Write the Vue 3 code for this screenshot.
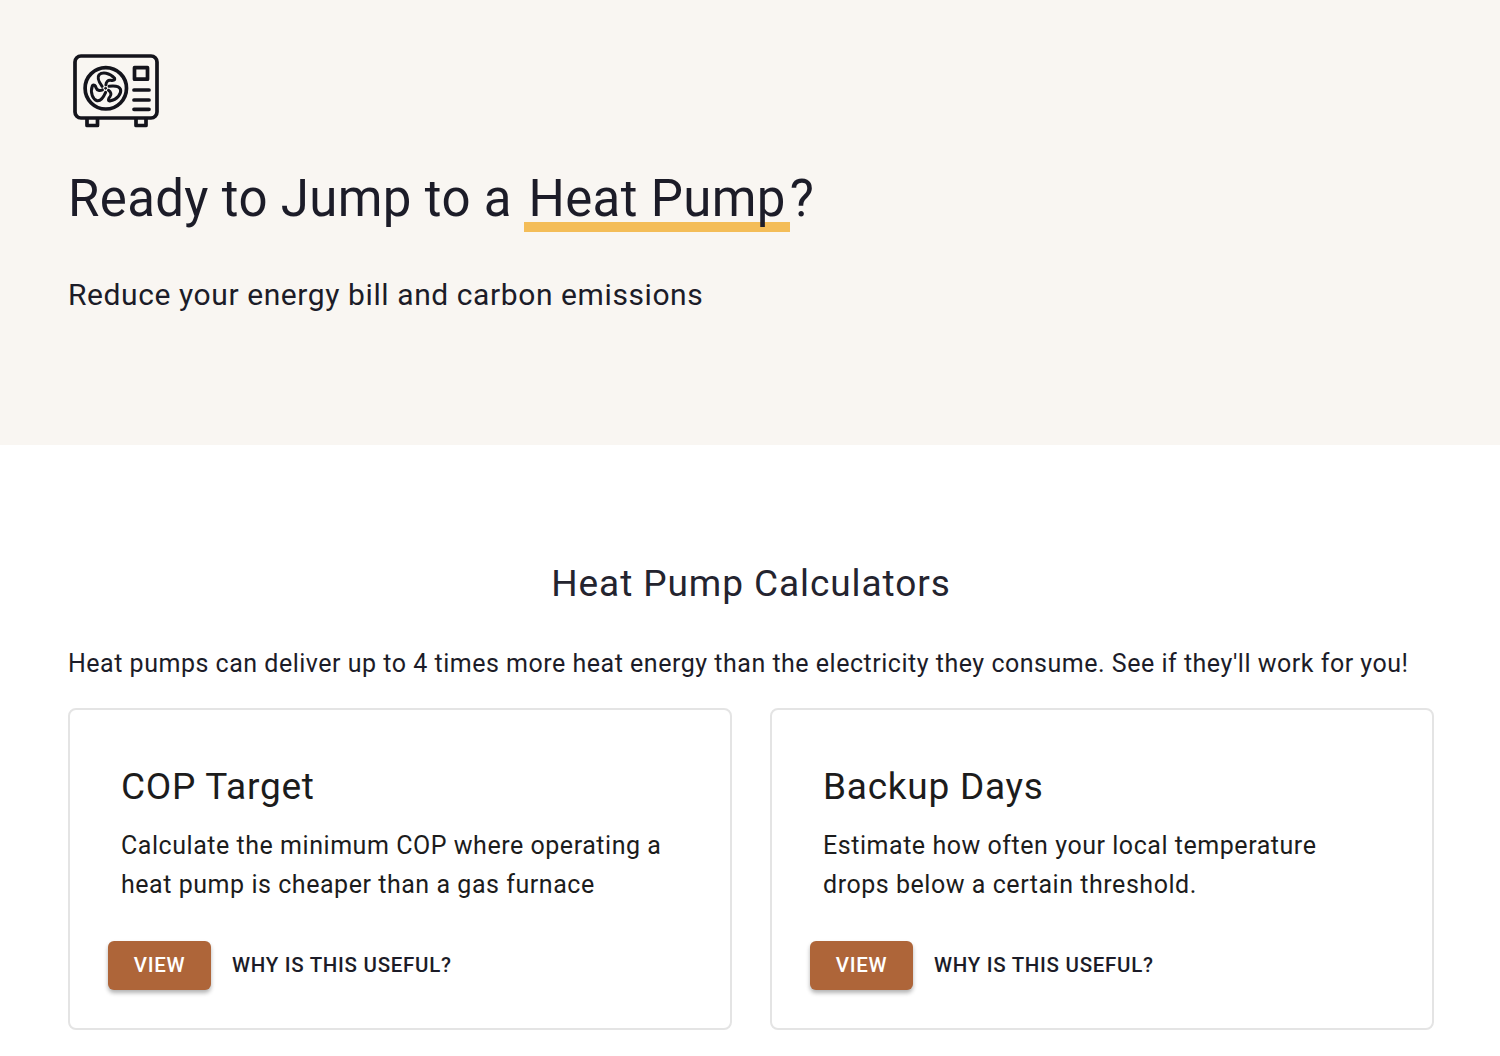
<template>
  <div class="page">
    <section class="hero">
      <svg class="logo" viewBox="0 0 96 84" fill="none" stroke="#14141c" stroke-width="3.700" stroke-linecap="round" stroke-linejoin="round">
        <rect x="7" y="8" width="82" height="62" rx="6" />
        <path d="M19 71v6.500h10.500V71M68 71v6.500h10V71" />
        <circle cx="37.800" cy="40.300" r="20.700" />
        <circle cx="37.600" cy="40.300" r="1" fill="#14141c" stroke-width="1" />
        <g v-for="angle in bladeAngles" :key="angle" :transform="`translate(37.600 40.300) rotate(${angle})`">
          <path d="M-3.500-2C-6.500-6-8.500-11-6.500-13.500-3.500-16.500 4-16 9-10 9.500-8 7.500-7.500 5-8 2.500-8.500.5-6.500.3-3.500" stroke-width="3" />
        </g>
        <rect x="66.500" y="19.700" width="13" height="11.500" />
        <path d="M66 42h15M66 52h15M66 61.300h15" />
      </svg>
      <h1 class="title">Ready to Jump to a <span class="mark">Heat Pump</span>?</h1>
      <p class="lead">Reduce your energy bill and carbon emissions</p>
    </section>
    <section class="content">
      <h2 class="heading">Heat Pump Calculators</h2>
      <p class="intro">Heat pumps can deliver up to 4 times more heat energy than the electricity they consume. See if they'll work for you!</p>
      <div class="cards">
        <article v-for="card in cards" :key="card.title" class="card">
          <h3 class="card-title">{{ card.title }}</h3>
          <p class="card-text">{{ card.text }}</p>
          <div class="actions">
            <button class="view">VIEW</button>
            <button class="why">WHY IS THIS USEFUL?</button>
          </div>
        </article>
      </div>
    </section>
  </div>
</template>

<script setup>
const bladeAngles = [0, 120, 240]
const cards = [
  { title: 'COP Target', text: 'Calculate the minimum COP where operating a heat pump is cheaper than a gas furnace' },
  { title: 'Backup Days', text: 'Estimate how often your local temperature drops below a certain threshold.' }
]
</script>

<style>
html, body { margin: 0; background: #fff; }
</style>

<style scoped>
.page { font-family: Roboto, "Liberation Sans", sans-serif; color: #1c1c28; width: 1500px; }
.hero { background: #f9f6f2; height: 445px; box-sizing: border-box; padding: 48px 68px 0; }
.logo { display: block; width: 96px; height: 84px; }
.title { margin: 35px 0 0; font-size: 51px; line-height: 64px; font-weight: 400; letter-spacing: 0.35px; }
.mark { display: inline-block; margin: 0 0 -7px -0.500px; padding: 0 4px 7px; line-height: 52px; background: linear-gradient(#f4bd58, #f4bd58) left bottom / 100% 10px no-repeat; }
.lead { margin: 44px 0 0; font-size: 30px; line-height: 40px; letter-spacing: 0.59px; }
.content { padding: 0 66px 0 68px; }
.heading { margin: 113px 0 0; text-align: center; font-size: 37px; line-height: 52px; font-weight: 400; letter-spacing: 0.92px; color: #24242f; }
.intro { margin: 34px 0 0; font-size: 25px; line-height: 40px; letter-spacing: 0.51px; white-space: nowrap; }
.cards { display: grid; grid-template-columns: 663.500px 663.500px; gap: 38.500px; margin-top: 24px; }
.card { box-sizing: border-box; height: 322px; border: 2px solid #e4e4e4; border-radius: 8px; padding: 52px 40px 0 51px; }
.card-title { margin: 0; font-size: 37px; line-height: 50px; font-weight: 400; letter-spacing: 0.75px; color: #1c1c1c; }
.card-text { margin: 14px 0 0; font-size: 25px; line-height: 39px; letter-spacing: 0.54px; color: #1c1c1c; max-width: 560px; }
.actions { display: flex; align-items: center; margin: 37px 0 0 -13px; gap: 21px; }
.view, .why { font: 500 20.500px/28px Roboto, sans-serif; letter-spacing: 0.7px; border: 0; cursor: pointer; }
.view { width: 103px; height: 48.500px; padding: 0; background: #ae6539; color: #fff; border-radius: 6px; box-shadow: 0 3px 4px rgba(0,0,0,.3); }
.why { background: none; color: #1c1c28; padding: 0; }
</style>
